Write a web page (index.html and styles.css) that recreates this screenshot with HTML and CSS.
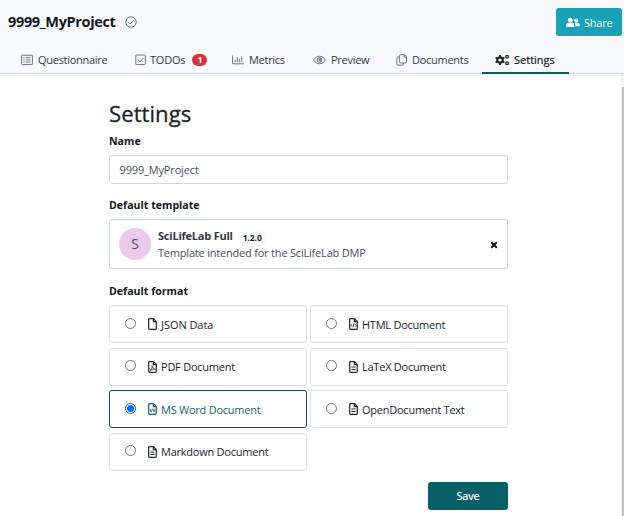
FILE: index.html
```html
<!DOCTYPE html>
<html lang="en">
<head>
<meta charset="utf-8">
<title>9999_MyProject</title>
<link rel="stylesheet" href="styles.css">
</head>
<body>
<svg class="defs" aria-hidden="true">
  <symbol id="file" viewBox="0 0 9 12"><path d="M1.3.7h4.200l2.800 2.800v7a.8.8 0 0 1-.8.8h-6a.8.8 0 0 1-.8-.8v-9a.8.8 0 0 1 .6-.8zM5.400.8v2.900h2.800"/></symbol>
</svg>
<header class="header">
  <div class="title-row">
    <h1 class="project"><span class="project-name">9999_MyProject</span>
      <svg class="check" viewBox="0 0 12 12"><circle cx="6" cy="6" r="5.200"/><path d="M3.400 6.100l1.800 1.800 3.400-3.500"/></svg>
    </h1>
    <button class="share"><svg viewBox="0 0 15 11"><circle cx="4.600" cy="3" r="2.500"/><circle cx="11" cy="3.200" r="2.100"/><path d="M.3 10.300V8.200c0-1.400 1-2.300 2.300-2.300h4c1.300 0 2.300.9 2.300 2.300v2.100zM9.800 9.600h4.900V8c0-1.400-.9-2.200-2-2.200H9.200c.5.6.8 1.300.8 2.200z"/></svg><span>Share</span></button>
  </div>
  <nav class="tabs">
    <a class="tab tab-questionnaire"><svg viewBox="0 0 12 12"><rect x=".6" y="1.200" width="10.800" height="9.400" rx=".7"/><path d="M2.400 3.700h1.200M2.400 5.900h1.200M2.400 8.100h1.200M4.600 3.700h5M4.600 5.900h5M4.600 8.100h5"/></svg><span>Questionnaire</span></a>
    <a class="tab tab-todos"><svg viewBox="0 0 12 12"><rect x=".8" y="1" width="9.600" height="9.600" rx=".7"/><path d="M3 5.800l1.900 1.900L8.400 4"/></svg><span>TODOs</span><b class="badge">1</b></a>
    <a class="tab tab-metrics"><svg viewBox="0 0 12 12"><path d="M.6 1.600v8.200h11M3.200 8.300V6M5.400 8.300V3.400M7.600 8.300V4.800M9.800 8.300V2.400"/></svg><span>Metrics</span></a>
    <a class="tab tab-preview"><svg viewBox="0 0 13 12"><path d="M.7 6C2 3.500 4 2.300 6.500 2.300S11 3.500 12.300 6C11 8.500 9 9.700 6.500 9.700S2 8.500.7 6z"/><circle cx="6.500" cy="6" r="2.300"/><circle class="solid" cx="6.800" cy="5.800" r="1.400"/></svg><span>Preview</span></a>
    <a class="tab tab-documents"><svg viewBox="0 0 12 12"><path d="M4.200.7h4.300l2 2v5.600a.6.6 0 0 1-.6.6H4.200a.6.6 0 0 1-.6-.6v-7a.6.6 0 0 1 .6-.6zM8.200.8v2.300h2.200M3.400 2.900H1.500a.6.6 0 0 0-.6.6v7c0 .4.200.6.6.6h5.400a.6.6 0 0 0 .6-.6V9"/></svg><span>Documents</span></a>
    <a class="tab tab-settings active"><svg viewBox="0 0 15 12"><circle class="gear" cx="5" cy="6" r="2.700"/><path class="teeth" d="M5 .9v2M5 9.100v2M.6 3.500l1.800 1M7.600 7.500l1.800 1M.6 8.500l1.800-1M7.600 4.500l1.800-1"/><circle class="small-gear" cx="12" cy="2.800" r="1.400"/><circle class="small-gear" cx="12" cy="9.300" r="1.400"/></svg><span>Settings</span></a>
  </nav>
</header>
<main class="main">
  <form class="settings">
    <h2 class="heading">Settings</h2>
    <label class="label label-name">Name</label>
    <div class="input">9999_MyProject</div>
    <label class="label label-template">Default template</label>
    <div class="template">
      <div class="avatar">S</div>
      <div class="info">
        <div class="name-row"><strong class="template-name">SciLifeLab Full</strong><span class="version">1.2.0</span></div>
        <div class="description">Template intended for the SciLifeLab DMP</div>
      </div>
      <svg class="clear" viewBox="0 0 8 8"><path d="M1.200 1.200l5.600 5.600M6.800 1.200L1.200 6.800"/></svg>
    </div>
    <label class="label label-format">Default format</label>
    <div class="formats">
      <div class="format"><i class="radio"></i><svg viewBox="0 0 9 12"><use href="#file"/></svg><span>JSON Data</span></div>
      <div class="format"><i class="radio"></i><svg viewBox="0 0 9 12"><use href="#file"/><path class="mark" d="M3.100 5.800L2 7.300l1.100 1.500M5.900 5.800L7 7.300 5.900 8.800M4.900 5.400l-.8 4"/></svg><span>HTML Document</span></div>
      <div class="format"><i class="radio"></i><svg viewBox="0 0 9 12"><use href="#file"/><path class="mark" d="M4 4.500c.7 2 1.400 3.400 3.200 3.900C5 8 3.200 8.500 1.900 9.800 3.500 8.600 4.400 6.500 4 4.500z"/></svg><span>PDF Document</span></div>
      <div class="format"><i class="radio"></i><svg viewBox="0 0 9 12"><use href="#file"/><path class="lines" d="M2.400 6h4.200M2.400 8.500h4.200"/></svg><span>LaTeX Document</span></div>
      <div class="format selected"><i class="radio"></i><svg viewBox="0 0 9 12"><use href="#file"/><path class="mark" d="M2 5.500l1 3.700 1.500-3.400L6 9.200l1-3.700"/></svg><span>MS Word Document</span></div>
      <div class="format"><i class="radio"></i><svg viewBox="0 0 9 12"><use href="#file"/><path class="lines" d="M2.400 6h4.200M2.400 8.500h4.200"/></svg><span>OpenDocument Text</span></div>
      <div class="format"><i class="radio"></i><svg viewBox="0 0 9 12"><use href="#file"/><path class="lines" d="M2.400 6h4.200M2.400 8.500h4.200"/></svg><span>Markdown Document</span></div>
    </div>
    <div class="actions"><button class="save" type="button">Save</button></div>
  </form>
  <div class="scrollbar"><div class="thumb"></div></div>
</main>
</body>
</html>
```
FILE: styles.css
```css
* { box-sizing: border-box; }
body { margin: 0; height: 516px; overflow: hidden; background: #fff; color: #212529; font: 11px/16px "Open Sans", "Noto Sans", sans-serif; }
svg { display: block; flex: none; fill: none; stroke: currentColor; stroke-width: 1; }
.defs { position: absolute; width: 0; height: 0; }
h1, h2 { margin: 0; }
button { border: 0; padding: 0; color: #fff; font: inherit; }

.header { height: 74px; background: #f8f9fb; border-bottom: 1px solid #d5d9dd; }
.title-row { display: flex; justify-content: space-between; height: 47px; padding: 8px 2px 0 8px; }
.project { display: flex; align-items: center; height: 28px; gap: 9.500px; color: #15191c; font-size: 14.500px; font-weight: 700; letter-spacing: -.35px; }
.check { width: 12px; height: 12px; color: #6c757d; }
.share { display: flex; align-items: center; gap: 4px; width: 66px; height: 28px; padding-left: 10px; border-radius: 3px; background: #17a2b8; letter-spacing: -.25px; }
.share svg { width: 14px; height: 11px; fill: currentColor; stroke: none; }
.share span { padding-top: 1px; }

.tabs { display: flex; height: 27px; padding-left: 8px; }
.tab { display: flex; align-items: center; height: 27px; padding: 0 0 1px 13px; color: #343a40; white-space: nowrap; letter-spacing: -.28px; }
.tab svg { width: 12px; height: 12px; margin-right: 5px; color: #6c757d; }
.tab .solid { fill: currentColor; stroke: none; }
.tab-questionnaire { width: 114px; }
.tab-todos { width: 97px; }
.tab-todos svg { margin-right: 3px; }
.tab-todos > span { letter-spacing: -.2px; }
.tab-metrics { width: 81px; }
.tab-preview { width: 83px; }
.tab-documents { width: 99px; }
.tab-documents svg { margin-right: 4px; }
.tab-preview svg { width: 13px; margin-right: 5px; }
.tab-settings svg { width: 15px; margin-right: 4px; color: #212529; }
.tab-settings { width: 87px; letter-spacing: 0; }
.tab.active { border-bottom: 2px solid #055f64; padding-bottom: 0; color: #15191c; font-weight: 500; -webkit-text-stroke: .2px; }
.gear { stroke-width: 2.200; }
.teeth { stroke-width: 2; }
.small-gear { stroke-width: 1.300; }
.badge { display: flex; align-items: center; justify-content: center; width: 15px; height: 12px; margin-left: 7px; border-radius: 6px; background: #d9303e; color: #fff; font-size: 9px; font-weight: 700; }

.main { display: flex; justify-content: space-between; height: 442px; }
.settings { width: 399px; margin-left: 109px; padding-top: 26px; }
.heading { height: 33px; line-height: 27px; color: #212529; font-size: 22.200px; font-weight: 400; -webkit-text-stroke: .3px; }
.label { display: block; height: 22px; line-height: 16px; color: #15191c; font-size: 10.600px; font-weight: 700; }
.input { height: 29px; padding: 6px 9.500px; border: 1px solid #d3d7db; border-radius: 3px; color: #495057; letter-spacing: -.15px; }
.label-template { margin-top: 13px; }
.template { display: flex; align-items: center; height: 50px; padding: 0 9px; border: 1px solid #ced4da; border-radius: 3px; }
.avatar { display: flex; align-items: center; justify-content: center; width: 32px; height: 32px; margin-right: 7px; border-radius: 50%; background: #ebc9ed; color: #495057; font-size: 14px; }
.info { flex: 1; }
.name-row { display: flex; height: 17px; }
.template-name { color: #343a40; letter-spacing: -.22px; }
.version { height: 13px; margin: 3px 0 0 6px; padding: 0 4px; border-radius: 3px; background: #f8f9fa; color: #212529; font-size: 8.500px; font-weight: 700; line-height: 13px; letter-spacing: -.1px; }
.description { color: #495057; letter-spacing: -.2px; }
.clear { width: 8px; height: 8px; margin-top: 1px; color: #15191c; stroke-width: 2; }
.label-format { margin-top: 14px; }
.formats { display: grid; grid-template-columns: 198px 198px; gap: 4.500px 3px; }
.format { display: flex; align-items: center; height: 38px; padding-left: 15px; border: 1px solid #dee2e6; border-radius: 3px; letter-spacing: -.24px; }
.format span { padding-top: 1px; }
.radio { display: flex; align-items: center; justify-content: center; width: 11px; height: 11px; margin: -2px 12px 0 0; border: 1px solid #767676; border-radius: 50%; }
.format svg { width: 9px; height: 12px; margin-right: 4px; stroke-width: 1.200; }
.format .mark { stroke-width: .8; }
.format .lines { stroke-width: 1.200; }
.format:first-child { letter-spacing: -.05px; }
.format.selected { border-color: #16525b; color: #1c5f63; }
.selected .radio { border-color: #0075ff; }
.selected .radio::after { content: ""; width: 7px; height: 7px; border-radius: 50%; background: #0075ff; }
.actions { display: flex; justify-content: flex-end; margin-top: 11px; }
.save { width: 80px; height: 28px; border-radius: 3px; background: #055f64; -webkit-text-stroke: .2px; letter-spacing: -.15px; }
.scrollbar { width: 3px; padding: 13px 0 0 1px; background: #f1f1f1; }
.thumb { height: 429px; background: #c1c1c1; }
```
